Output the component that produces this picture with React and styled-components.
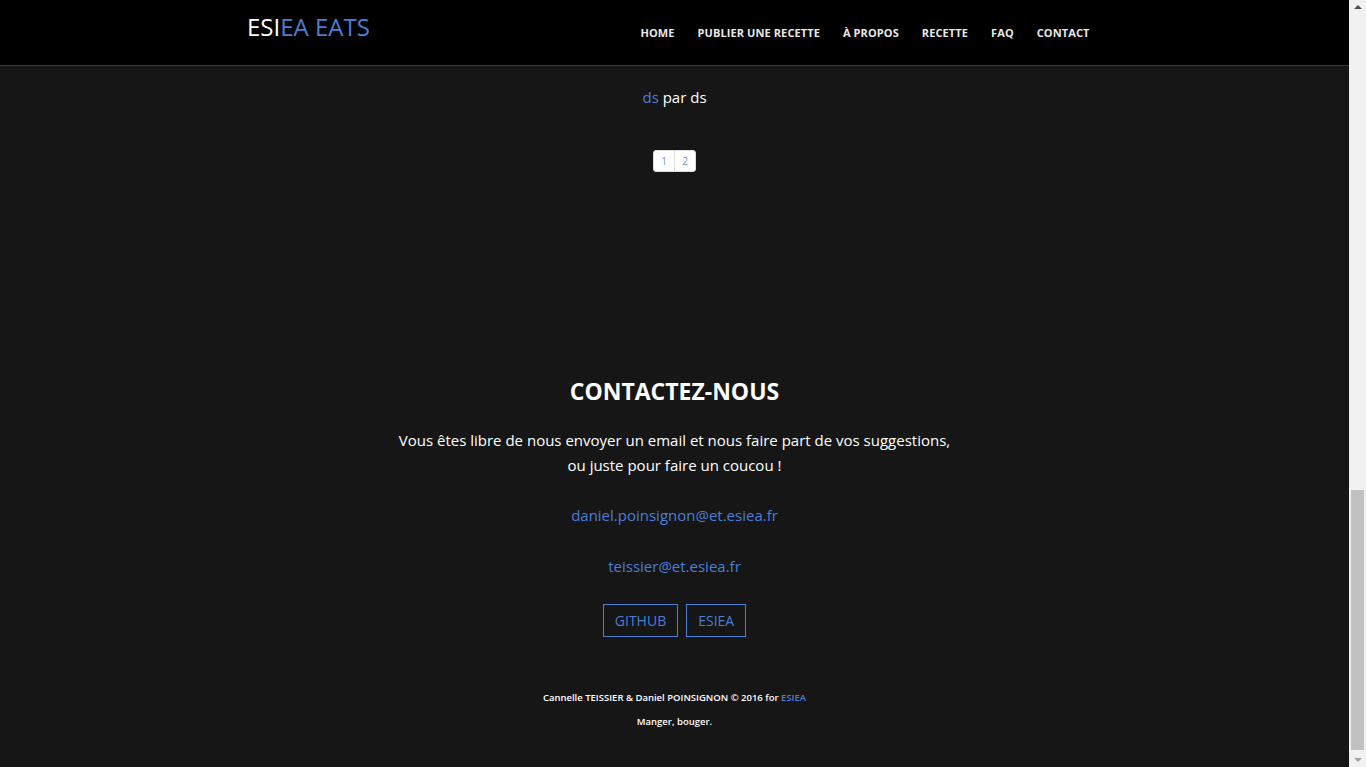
import React from "react";
import styled, { createGlobalStyle } from "styled-components";

const BLUE = "#4a7fd6";

const Global = createGlobalStyle`
  body {
    margin: 0;
    background: #161616;
    color: #fff;
    font-family: "Open Sans", "Noto Sans", sans-serif;
    overflow: hidden;
  }
  a { color: ${BLUE}; text-decoration: none; }
`;

const Page = styled.div`
  margin-right: 17px;
  min-height: 767px;
`;

const Header = styled.header`
  height: 65px;
  background: #000;
  border-bottom: 1px solid #3a3a3a;
`;

const HeaderInner = styled.div`
  height: 100%;
  padding: 0 259px 0 247px;
  display: flex;
  align-items: flex-start;
  justify-content: space-between;
`;

const Brand = styled.a`
  margin-top: 11px;
  font-size: 24px;
  line-height: 32px;
  color: ${BLUE};
`;

const BrandWhite = styled.span`
  color: #fff;
`;

const Nav = styled.nav`
  display: flex;
  margin-top: 24px;
  margin-right: -11px;
`;

const NavLink = styled.a`
  color: #e8e8e8;
  font-size: 11px;
  font-weight: 700;
  line-height: 18px;
  padding: 0 11.5px;
  letter-spacing: 0.1px;
  text-transform: uppercase;
`;

const Recipes = styled.section`
  padding-top: 21px;
  display: flex;
  flex-direction: column;
  align-items: center;
`;

const RecipeLine = styled.p`
  margin: 0;
  font-size: 15px;
  line-height: 20px;
  color: #fff;
`;

const Pagination = styled.ul`
  list-style: none;
  margin: 43px 0 0;
  padding: 0;
  display: flex;
`;

const PageItem = styled.li`
  & + & a { margin-left: -1px; }
  &:first-child a { border-radius: 3px 0 0 3px; }
  &:last-child a { border-radius: 0 3px 3px 0; }
`;

const PageLink = styled.a`
  display: block;
  width: 20px;
  height: 20px;
  line-height: 20px;
  text-align: center;
  font-size: 10px;
  background: #fff;
  border: 1px solid #ddd;
  color: #6d93d6;
  box-sizing: content-box;
`;

const Contact = styled.section`
  margin-top: 204px;
  display: flex;
  flex-direction: column;
  align-items: center;
  text-align: center;
`;

const Title = styled.h2`
  margin: 0;
  font-size: 23px;
  font-weight: 700;
  line-height: 30px;
  text-transform: uppercase;
`;

const Lead = styled.p`
  margin: 22px 0 0;
  font-size: 15px;
  line-height: 25px;
  color: #fff;
`;

const Email = styled.a`
  display: block;
  margin-top: ${(p) => p.$mt}px;
  font-size: 15px;
  line-height: 24px;
`;

const Buttons = styled.div`
  margin-top: 26px;
  display: flex;
  gap: 8px;
`;

const OutlineButton = styled.a`
  display: block;
  height: 31px;
  line-height: 31px;
  padding: 0 11px;
  border: 1px solid ${BLUE};
  font-size: 14px;
  text-transform: uppercase;
`;

const Footer = styled.footer`
  margin-top: 54px;
  padding-bottom: 38px;
  display: flex;
  flex-direction: column;
  align-items: center;
  gap: 10px;
`;

const FooterLine = styled.p`
  margin: 0;
  font-size: 9.5px;
  font-weight: 600;
  line-height: 14px;
  color: #fff;
`;

const Scrollbar = styled.div`
  position: fixed;
  top: 0;
  right: 0;
  width: 17px;
  height: 100vh;
  background: #f1f1f1;
  display: flex;
  flex-direction: column;
  align-items: center;
  justify-content: space-between;
`;

const Arrow = styled.div`
  width: 0;
  height: 0;
  margin: 5px 0;
  border-left: 4px solid transparent;
  border-right: 4px solid transparent;
  ${(p) =>
    p.$down
      ? `border-top: 4px solid #a3a3a3;`
      : `border-bottom: 4px solid #505050;`}
`;

const Thumb = styled.div`
  position: absolute;
  left: 2px;
  right: 2px;
  top: 490px;
  height: 260px;
  background: #c1c1c1;
`;

export default function App() {
  const nav = ["Home", "Publier une recette", "À propos", "Recette", "FAQ", "Contact"];

  return (
    <>
      <Global />
      <Page>
        <Header>
          <HeaderInner>
            <Brand href="#">
              <BrandWhite>ESI</BrandWhite>EA EATS
            </Brand>
            <Nav>
              {nav.map((n) => (
                <NavLink key={n} href="#">{n}</NavLink>
              ))}
            </Nav>
          </HeaderInner>
        </Header>
        <main>
          <Recipes>
            <RecipeLine>
              <a href="#">ds</a> par ds
            </RecipeLine>
            <Pagination>
              <PageItem><PageLink href="#">1</PageLink></PageItem>
              <PageItem><PageLink href="#">2</PageLink></PageItem>
            </Pagination>
          </Recipes>
          <Contact>
            <Title>Contactez-nous</Title>
            <Lead>
              Vous êtes libre de nous envoyer un email et nous faire part de vos suggestions,
              <br />
              ou juste pour faire un coucou !
            </Lead>
            <Email $mt={24.5} href="#">daniel.poinsignon@et.esiea.fr</Email>
            <Email $mt={27} href="#">teissier@et.esiea.fr</Email>
            <Buttons>
              <OutlineButton href="#">Github</OutlineButton>
              <OutlineButton href="#">Esiea</OutlineButton>
            </Buttons>
          </Contact>
          <Footer>
            <FooterLine>
              Cannelle TEISSIER &amp; Daniel POINSIGNON © 2016 for <a href="#">ESIEA</a>
            </FooterLine>
            <FooterLine>Manger, bouger.</FooterLine>
          </Footer>
        </main>
      </Page>
      <Scrollbar>
        <Arrow />
        <Thumb />
        <Arrow $down />
      </Scrollbar>
    </>
  );
}
